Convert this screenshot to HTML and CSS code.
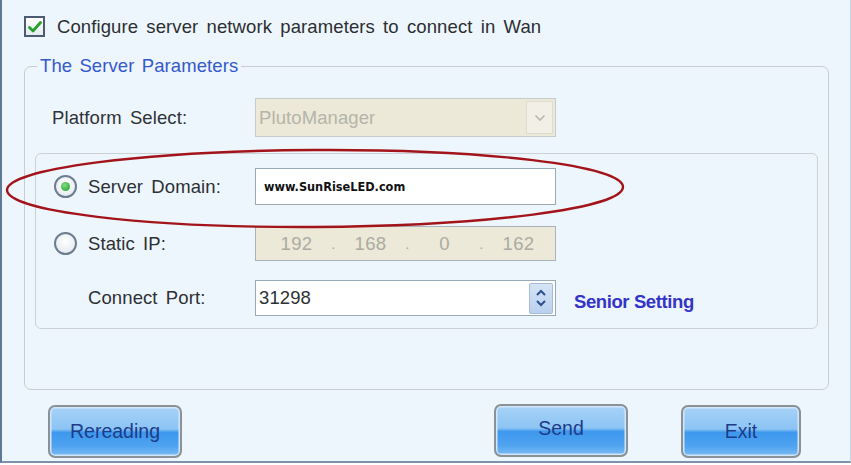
FILE: index.html
```html
<!DOCTYPE html>
<html>
<head>
<meta charset="utf-8">
<link rel="stylesheet" href="styles.css">
</head>
<body>
<div class="window">
  <div class="top-row">
    <span class="checkbox">
      <svg width="14" height="12" viewBox="0 0 14 12"><path d="M1.5 6.5 L5 10 L12.5 1.5" fill="none" stroke="#27a12b" stroke-width="2.8" stroke-linecap="round" stroke-linejoin="round"/></svg>
    </span>
    <span class="top-label">Configure server network parameters to connect in Wan</span>
  </div>

  <fieldset class="group">
    <legend class="legend">The Server Parameters</legend>
    <div class="platform-row">
      <span class="plat-label">Platform Select:</span>
      <div class="select">
        <span class="select-text">PlutoManager</span>
        <span class="select-btn">
          <svg width="12" height="8" viewBox="0 0 12 8"><path d="M1.5 1.5 L6 6 L10.5 1.5" fill="none" stroke="#b9b9b0" stroke-width="1.6"/></svg>
        </span>
      </div>
    </div>

    <div class="inner">
      <div class="row row-domain">
        <span class="radio on"><span class="dot"></span></span>
        <span class="label">Server Domain:</span>
        <div class="field white"><span class="domain">www.SunRiseLED.com</span></div>
      </div>
      <div class="row row-ip">
        <span class="radio"></span>
        <span class="label">Static IP:</span>
        <div class="field beige ip">
          <span class="oct">192</span><span class="sep">.</span><span class="oct">168</span><span class="sep">.</span><span class="oct">0</span><span class="sep">.</span><span class="oct">162</span>
        </div>
      </div>
      <div class="row row-port">
        <span class="radio-space"></span>
        <span class="label">Connect Port:</span>
        <div class="field white port">
          <span class="port-text">31298</span>
          <span class="spin">
            <svg width="12" height="22" viewBox="0 0 12 22"><path d="M2 8 L6 4 L10 8" fill="none" stroke="#2c4f8c" stroke-width="2"/><path d="M2 14 L6 18 L10 14" fill="none" stroke="#2c4f8c" stroke-width="2"/></svg>
          </span>
        </div>
        <span class="senior">Senior Setting</span>
      </div>
    </div>
  </fieldset>

  <div class="buttons">
    <button class="btn rereading">Rereading</button>
    <button class="btn send">Send</button>
    <button class="btn exit">Exit</button>
  </div>

  <svg class="ellipse" width="851" height="465" viewBox="0 0 851 465">
    <ellipse cx="315" cy="188.5" rx="308" ry="38.5" fill="none" stroke="#a3141a" stroke-width="2.4" transform="rotate(-0.3 315 188)"/>
  </svg>
</div>
</body>
</html>
```

FILE: styles.css
```css
* { box-sizing: border-box; }
html, body { margin: 0; padding: 0; }
body {
  width: 851px;
  height: 465px;
  overflow: hidden;
  font-family: "Liberation Sans", Arial, sans-serif;
  font-size: 18.5px;
  word-spacing: 3px;
  letter-spacing: 0.1px;
  color: #2f3236;
}
.window {
  position: relative;
  width: 851px;
  height: 463px;
  background: #eef6fd;
  border-left: 2px solid #5f7896;
  border-bottom: 2px solid #7e93ab;
  border-right: 1px solid #c9d6e2;
  padding: 16px 0 0 22px;
}
.top-row {
  display: flex;
  align-items: center;
  height: 21px;
}
.checkbox {
  width: 21px;
  height: 21px;
  border: 2px solid #4c5b73;
  background: linear-gradient(#ffffff, #e6ebf1);
  display: flex;
  align-items: center;
  justify-content: center;
}
.top-label {
  margin-left: 12px;
  color: #2c2e31;
}
.group {
  margin: 19px 0 0 0;
  width: 805px;
  height: 334px;
  border: 1.5px solid #c6ccd2;
  border-radius: 7px;
  padding: 0 0 0 10px;
  position: relative;
}
.legend {
  color: #3459cc;
  padding: 0 3px 0 3px;
  margin-left: 2px;
  line-height: 20px;
  word-spacing: 2px;
}
.platform-row {
  display: flex;
  align-items: center;
  margin-top: 22px;
  height: 39px;
}
.plat-label {
  width: 220px;
  padding-left: 17px;
}
.select {
  width: 301px;
  height: 39px;
  background: #ece9d8;
  border: 1.5px solid #c7cbcc;
  display: flex;
  align-items: center;
  justify-content: space-between;
  padding: 0 2px 0 3px;
}
.select-text {
  color: #b5b4aa;
}
.select-btn {
  width: 27px;
  height: 33px;
  border: 1px solid #dcdcd2;
  background: #f1efe6;
  display: flex;
  align-items: center;
  justify-content: center;
}
.inner {
  margin-top: 16px;
  width: 783px;
  height: 176px;
  border: 1.5px solid #cbd1d6;
  border-radius: 6px;
  padding: 14px 0 0 18px;
  display: flex;
  flex-direction: column;
}
.row {
  display: flex;
  align-items: center;
  height: 36px;
}
.row-domain { height: 37px; }
.row-ip { height: 35px; margin-top: 21px; }
.row-port { height: 36px; margin-top: 19px; }
.radio, .radio-space {
  width: 23px;
  height: 23px;
  margin-right: 11px;
  flex: none;
}
.radio {
  border-radius: 50%;
  border: 2px solid #6c7d8f;
  background: radial-gradient(circle at 50% 40%, #ffffff, #dfe5ec);
  display: flex;
  align-items: center;
  justify-content: center;
}
.dot {
  width: 9px;
  height: 9px;
  border-radius: 50%;
  background: radial-gradient(circle at 40% 35%, #7de07d, #1e9a28);
}
.label {
  width: 167px;
  color: #2d3034;
}
.field {
  width: 301px;
  height: 100%;
  border: 1.5px solid #9aa9b6;
  display: flex;
  align-items: center;
}
.white { background: #ffffff; }
.beige { background: #ece9d8; border-color: #a9b3bb; }
.domain {
  font-family: "DejaVu Sans Condensed", "DejaVu Sans", Verdana, sans-serif;
  font-weight: bold;
  font-size: 12.6px;
  word-spacing: 0;
  letter-spacing: 0;
  color: #111;
  margin-left: 8px;
}
.ip {
  padding-left: 22px;
  color: #ababa2;
  letter-spacing: 0.3px;
}
.oct { width: 37px; text-align: center; }
.sep { width: 37px; text-align: center; font-size: 15px; }
.port { justify-content: space-between; padding: 0 2px 0 3px; }
.port-text { color: #2d3034; }
.spin {
  width: 24px;
  height: 31px;
  background: linear-gradient(#d5e4f7, #b9d0ee);
  border: 1px solid #a6bbd6;
  border-radius: 2px;
  display: flex;
  align-items: center;
  justify-content: center;
}
.senior {
  margin-left: 18px;
  margin-top: 8px;
  color: #3434c8;
  font-weight: bold;
  letter-spacing: -0.4px;
  word-spacing: 0;
}
.buttons {
  display: flex;
  align-items: center;
  padding-left: 24px;
  margin-top: 15px;
}
.btn {
  height: 53px;
  border: 2.5px solid #8b9195;
  border-radius: 7px;
  background: linear-gradient(#a7d2f7 0%, #8cc4f4 45%, #3d98ee 52%, #4fa3f0 80%, #7bbcf4 100%);
  box-shadow: inset 0 0 0 1.5px #d0e6fb;
  font-family: "Liberation Sans", Arial, sans-serif;
  font-size: 19.5px;
  color: #1c3c8a;
  padding: 0;
}
.rereading { width: 134px; }
.send { width: 134px; margin-left: 312px; margin-top: -3px; padding-bottom: 4px; }
.exit { width: 120px; margin-left: 53px; }
.ellipse {
  position: absolute;
  left: -2px;
  top: 0;
  pointer-events: none;
}
```
